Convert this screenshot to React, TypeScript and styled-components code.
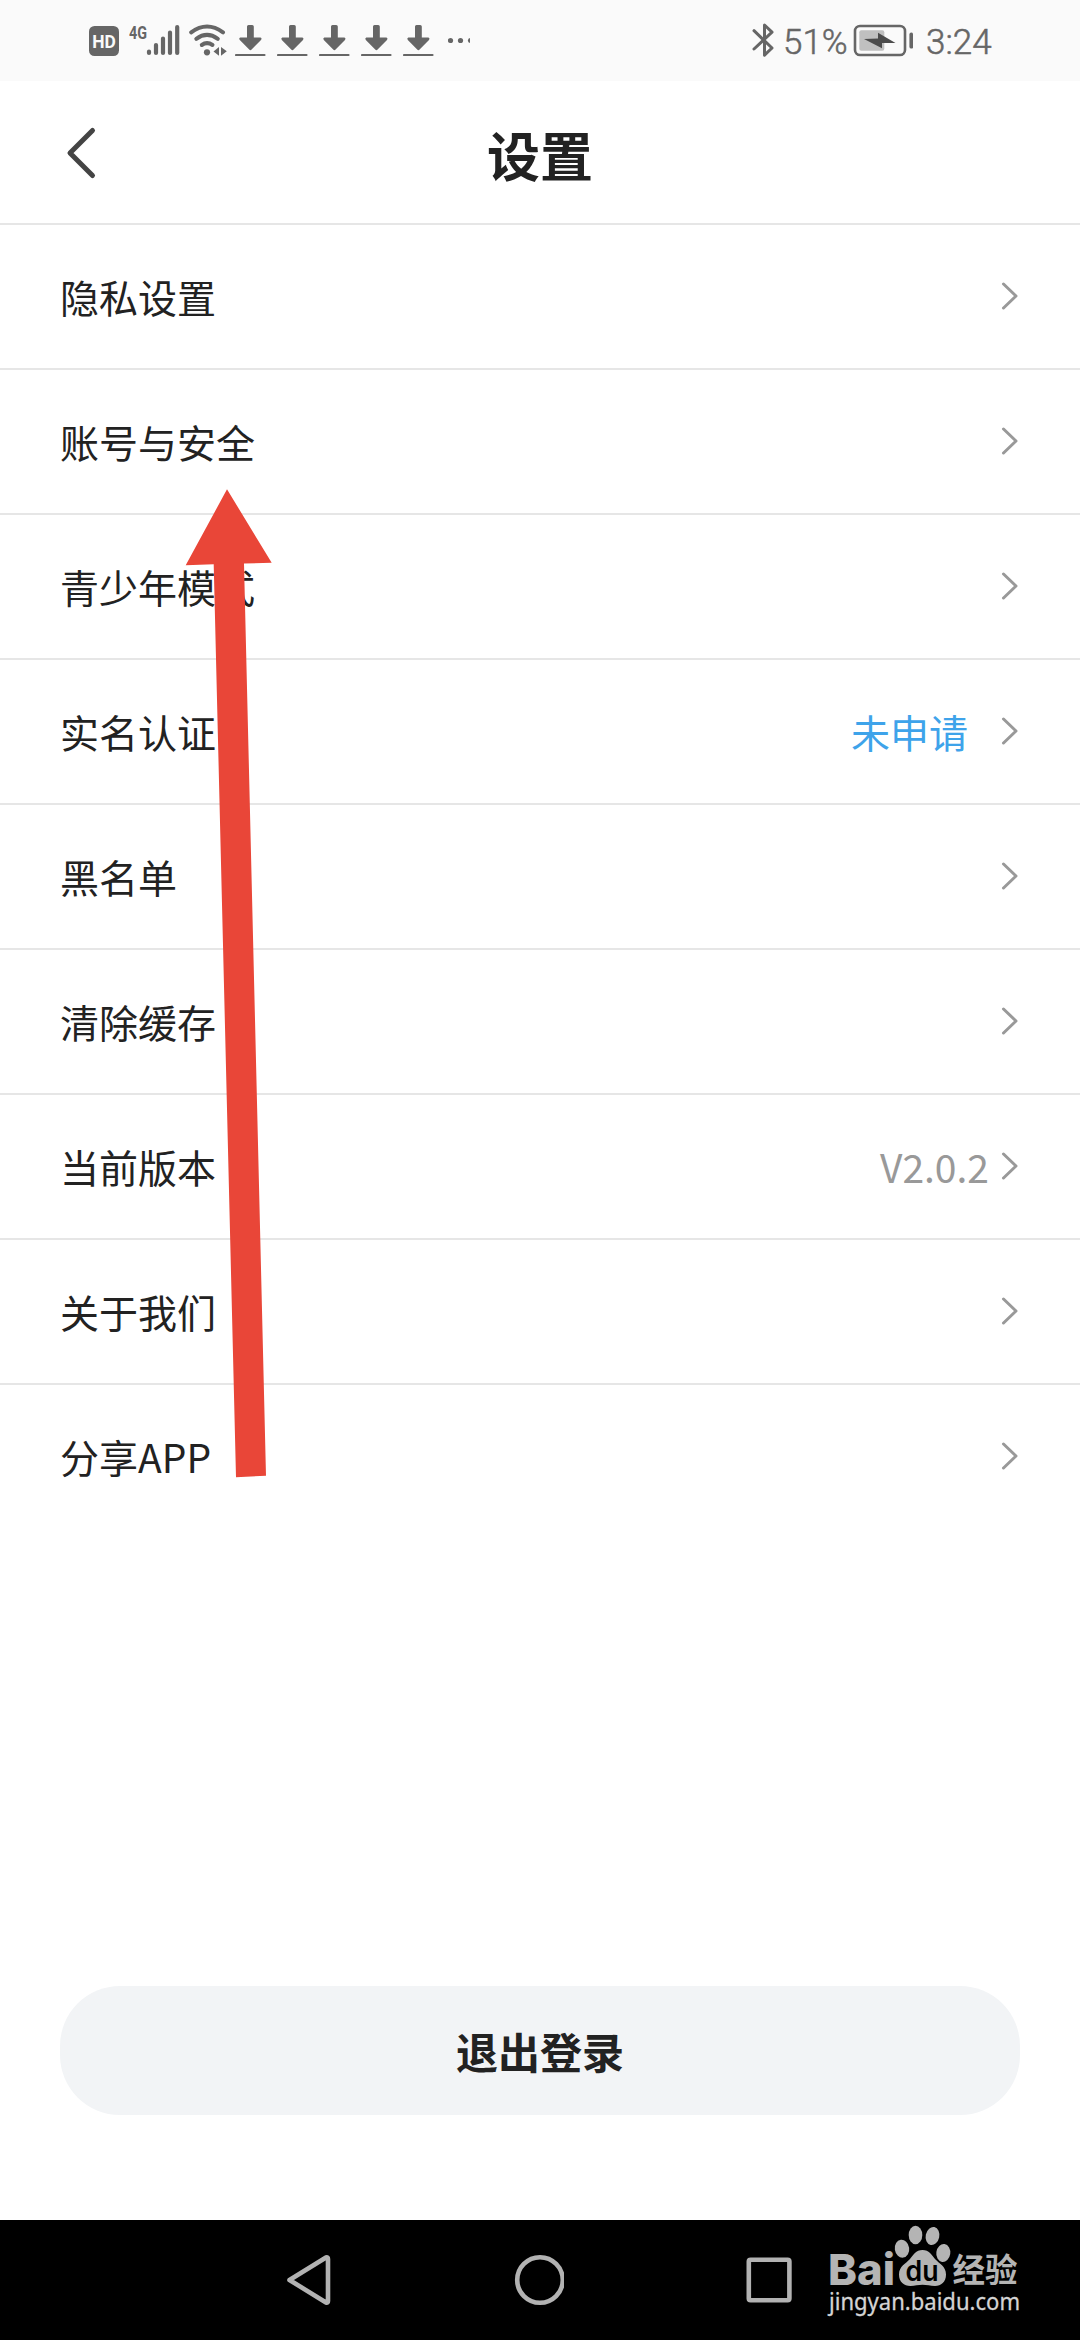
import React from "react";
import styled, { createGlobalStyle } from "styled-components";

const GlobalStyle = createGlobalStyle`
  *, *::before, *::after { box-sizing: border-box; }
  body { margin: 0; background: #fff; }
`;

const cjk = `"Noto Sans CJK SC", "Noto Sans", sans-serif`;

const Screen = styled.div`
  position: relative;
  width: 1080px;
  height: 2340px;
  display: flex;
  flex-direction: column;
  background: #fff;
  font-family: ${cjk};
  color: #222;
  overflow: hidden;
`;

const StatusBar = styled.header`
  height: 81px;
  flex: none;
  display: flex;
  justify-content: space-between;
  padding: 0 88px 0 89px;
  background: #fafafa;
  color: #666;
`;

const StatusGroup = styled.div`
  display: flex;
  align-items: center;
`;

const StatusIcon = styled.svg<{ $gap?: number }>`
  display: block;
  flex: none;
  height: 81px;
  margin-left: ${(p) => p.$gap ?? 0}px;
`;

const StatusText = styled.span<{ $gap: number; $width: number }>`
  width: ${(p) => p.$width}px;
  margin-left: ${(p) => p.$gap}px;
  padding-top: 3px;
  font: 300 35px/41px Roboto, sans-serif;
  -webkit-text-stroke: 0.5px #666;
  white-space: nowrap;
`;

const TitleBar = styled.div`
  height: 144px;
  flex: none;
  display: grid;
  grid-template-columns: 120px 1fr 120px;
  align-items: center;
  border-bottom: 2px solid #e6e6e6;
`;

const BackButton = styled.button`
  display: flex;
  align-items: center;
  height: 100%;
  padding: 2px 0 0 64px;
  border: 0;
  background: none;
`;

const Title = styled.h1`
  margin: 0;
  padding-top: 3px;
  text-align: center;
  font-size: 53px;
  line-height: 64px;
  font-weight: 700;
`;

const List = styled.ul`
  flex: 1;
  margin: 0;
  padding: 0;
  list-style: none;
`;

const Row = styled.li`
  height: 145px;
  display: flex;
  align-items: center;
  padding: 0 61px 0 60px;
  border-bottom: 2px solid #e6e6e6;
  &:last-child { border-bottom-color: transparent; }
`;

const Label = styled.span`
  flex: 1;
  padding-bottom: 2px;
  font-size: 39px;
  line-height: 56px;
`;

const Value = styled.span<{ $accent?: boolean }>`
  padding-bottom: 2px;
  margin-right: ${(p) => (p.$accent ? 33 : 12)}px;
  font-size: 39px;
  line-height: 56px;
  color: ${(p) => (p.$accent ? "#3ea3ea" : "#999")};
`;

const Chevron = styled.svg`
  display: block;
  width: 18px;
  height: 30px;
  margin-bottom: 2px;
`;

const Footer = styled.div`
  flex: none;
  padding: 0 60px 105px;
`;

const LogoutButton = styled.button`
  display: block;
  width: 100%;
  height: 129px;
  padding: 0;
  border: 0;
  border-radius: 60px;
  background: #f2f4f6;
  color: #222;
  font: 700 42px/60px ${cjk};
`;

const NavBar = styled.nav`
  height: 120px;
  flex: none;
  display: flex;
  align-items: center;
  padding-left: 283px;
  gap: 177px;
  background: #000;
`;

const NavIcon = styled.svg`
  display: block;
  flex: none;
  width: 52px;
  height: 120px;
  fill: none;
  stroke: #b2b2b2;
  stroke-width: 4.6;
  stroke-linejoin: round;
`;

const Watermark = styled.svg`
  position: absolute;
  left: 820px;
  top: 2220px;
`;

const PointerArrow = styled.svg`
  position: absolute;
  left: 180px;
  top: 484px;
  pointer-events: none;
`;

const items: { label: string; value?: string; accent?: boolean }[] = [
  { label: "隐私设置" },
  { label: "账号与安全" },
  { label: "青少年模式" },
  { label: "实名认证", value: "未申请", accent: true },
  { label: "黑名单" },
  { label: "清除缓存" },
  { label: "当前版本", value: "V2.0.2" },
  { label: "关于我们" },
  { label: "分享APP" },
];

const HdBadge = () => (
  <StatusIcon width="30" viewBox="0 0 30 81">
    <rect x="0" y="26" width="30" height="30" rx="5.5" fill="#666" />
    <text x="3.2" y="48.3" textLength="23.6" lengthAdjust="spacingAndGlyphs" fill="#fafafa" fontFamily="Roboto, sans-serif" fontWeight="700" fontSize="19">HD</text>
  </StatusIcon>
);

const Signal = () => (
  <StatusIcon width="51" viewBox="129 0 51 81" $gap={10}>
    <text x="129" y="38.5" textLength="18" lengthAdjust="spacingAndGlyphs" fill="#666" fontFamily="Roboto, sans-serif" fontWeight="700" fontSize="19">4G</text>
    <g stroke="#666" strokeWidth="4.2" strokeLinecap="round">
      <path d="M149 51.5V53M156 45V53M163 38.5V53M170 32.5V53M177.2 27V53" />
    </g>
  </StatusIcon>
);

const Wifi = () => (
  <StatusIcon width="38" viewBox="189 0 38 81" $gap={9}>
    <g fill="none" stroke="#666" strokeWidth="4" strokeLinecap="round">
      <path d="M191.2 32.3Q207 20.6 223 32.3" />
      <path d="M196.3 38.8Q207 31 217.8 38.8" />
      <path d="M201.8 45Q207 41.3 212.5 45" />
    </g>
    <circle cx="207" cy="52.3" r="3.1" fill="#666" />
    <path d="M213.5 51.5L219 47V55.8ZM221 47L226.8 51.3L221 55.8Z" fill="#666" />
  </StatusIcon>
);

const Download = ({ gap }: { gap: number }) => (
  <StatusIcon width="31" viewBox="0 0 31 81" $gap={gap}>
    <path d="M12 26.5Q12 25 13.5 25H17.2Q18.8 25 18.8 26.5V37.5H25.5Q27.3 38.3 26 39.9L16.6 49.6Q15.4 50.8 14.2 49.6L4.8 39.9Q3.5 38.3 5.3 37.5H12Z" fill="#666" />
    <path d="M1 55H29.5" stroke="#666" strokeWidth="2.2" strokeLinecap="round" />
  </StatusIcon>
);

const More = () => (
  <StatusIcon width="22" viewBox="449 0 22 81" $gap={14}>
    <circle cx="451.5" cy="40.5" r="2.6" fill="#666" />
    <circle cx="461.5" cy="40.5" r="2.6" fill="#666" />
    <circle cx="471.5" cy="40.5" r="2.6" fill="#666" />
  </StatusIcon>
);

const Bluetooth = () => (
  <StatusIcon width="22" viewBox="752 0 22 81">
    <path d="M754 30.7L772 48L764.5 55.2V25L772 32.2L754 49" fill="none" stroke="#666" strokeWidth="3" strokeLinecap="round" strokeLinejoin="round" />
  </StatusIcon>
);

const Battery = () => (
  <StatusIcon width="60" viewBox="853 0 60 81" $gap={5}>
    <rect x="855" y="26" width="50" height="29" rx="5" fill="none" stroke="#666" strokeWidth="2.6" />
    <rect x="859.3" y="30.3" width="25" height="20.4" rx="2" fill="#c0c0c0" />
    <path d="M864 39L878 38.6V32.8L895.5 43L882 43V48.3Z" fill="#4c4c4c" />
    <path d="M911.3 34.5V46.7" stroke="#666" strokeWidth="3.8" strokeLinecap="round" />
  </StatusIcon>
);

export default function App() {
  return (
    <>
      <GlobalStyle />
      <Screen>
        <StatusBar>
          <StatusGroup>
            <HdBadge />
            <Signal />
            <Wifi />
            <Download gap={8} />
            <Download gap={11} />
            <Download gap={11} />
            <Download gap={11} />
            <Download gap={11} />
            <More />
          </StatusGroup>
          <StatusGroup>
            <Bluetooth />
            <StatusText $gap={9} $width={65}>51%</StatusText>
            <Battery />
            <StatusText $gap={13} $width={66}>3:24</StatusText>
          </StatusGroup>
        </StatusBar>

        <TitleBar>
          <BackButton aria-label="返回">
            <svg width="34" height="54" viewBox="0 0 34 54" fill="none" stroke="#444" strokeWidth="5" strokeLinecap="round" strokeLinejoin="round">
              <path d="M28.5 4.5L6 27L28.5 49.5" />
            </svg>
          </BackButton>
          <Title>设置</Title>
        </TitleBar>

        <List>
          {items.map((item) => (
            <Row key={item.label}>
              <Label>{item.label}</Label>
              {item.value && <Value $accent={item.accent}>{item.value}</Value>}
              <Chevron viewBox="0 0 18 30" fill="none" stroke="#999" strokeWidth="3" strokeLinecap="round" strokeLinejoin="round">
                <path d="M2.5 3L15 15L2.5 27" />
              </Chevron>
            </Row>
          ))}
        </List>

        <Footer>
          <LogoutButton>退出登录</LogoutButton>
        </Footer>

        <NavBar>
          <NavIcon viewBox="0 0 52 120">
            <path d="M6.5 60L43 37.5Q45 36.8 45 39V81Q45 83.2 43 82.5Z" />
          </NavIcon>
          <NavIcon viewBox="0 0 52 120">
            <circle cx="28" cy="60" r="22.8" />
          </NavIcon>
          <NavIcon viewBox="0 0 52 120">
            <rect x="7.8" y="39.8" width="40.6" height="40.4" rx="1.8" />
          </NavIcon>
        </NavBar>

        <PointerArrow width="96" height="998" viewBox="180 484 96 998">
          <path d="M227 489.3L271.7 562.7L244 563.5L266 1475.7L236 1477.3L213.7 564.3L185.7 565.3Z" fill="#e94638" />
        </PointerArrow>

        <Watermark width="220" height="120" viewBox="820 2220 220 120">
          <g fill="#b4b4b4">
            <text x="828" y="2284.7" textLength="67" lengthAdjust="spacingAndGlyphs" fontFamily="Inter, sans-serif" fontWeight="800" fontSize="43">Bai</text>
            <ellipse cx="902" cy="2248.7" rx="7.2" ry="9" transform="rotate(-8 902 2248.7)" />
            <ellipse cx="915.5" cy="2235" rx="6.8" ry="9.3" />
            <ellipse cx="932.5" cy="2236" rx="6.8" ry="9.2" transform="rotate(12 932.5 2236)" />
            <ellipse cx="943.3" cy="2253" rx="7" ry="9" transform="rotate(8 943.3 2253)" />
            <path d="M922.5 2250C929 2250 932 2255 935 2259C939 2263.5 946 2266 946 2274.5C946 2282 941 2286 935 2286C930 2286 927 2284.8 922.5 2284.8C918 2284.8 915 2286 910.5 2286C904 2286 899 2282 899 2274.5C899 2266 906 2263.5 910 2259C913 2255 916 2250 922.5 2250Z" />
            <text x="952.5" y="2281.5" textLength="65" lengthAdjust="spacingAndGlyphs" fontFamily={cjk} fontWeight="700" fontSize="33">经验</text>
          </g>
          <text x="905.5" y="2280.5" textLength="33" lengthAdjust="spacingAndGlyphs" fill="#000" fontFamily="Inter, sans-serif" fontWeight="600" fontSize="28">du</text>
          <text x="829" y="2310" textLength="191" lengthAdjust="spacingAndGlyphs" fill="#d4d4d4" stroke="#d4d4d4" strokeWidth="0.3" fontFamily="'Noto Sans', sans-serif" fontWeight="400" fontSize="23">jingyan.baidu.com</text>
        </Watermark>
      </Screen>
    </>
  );
}
